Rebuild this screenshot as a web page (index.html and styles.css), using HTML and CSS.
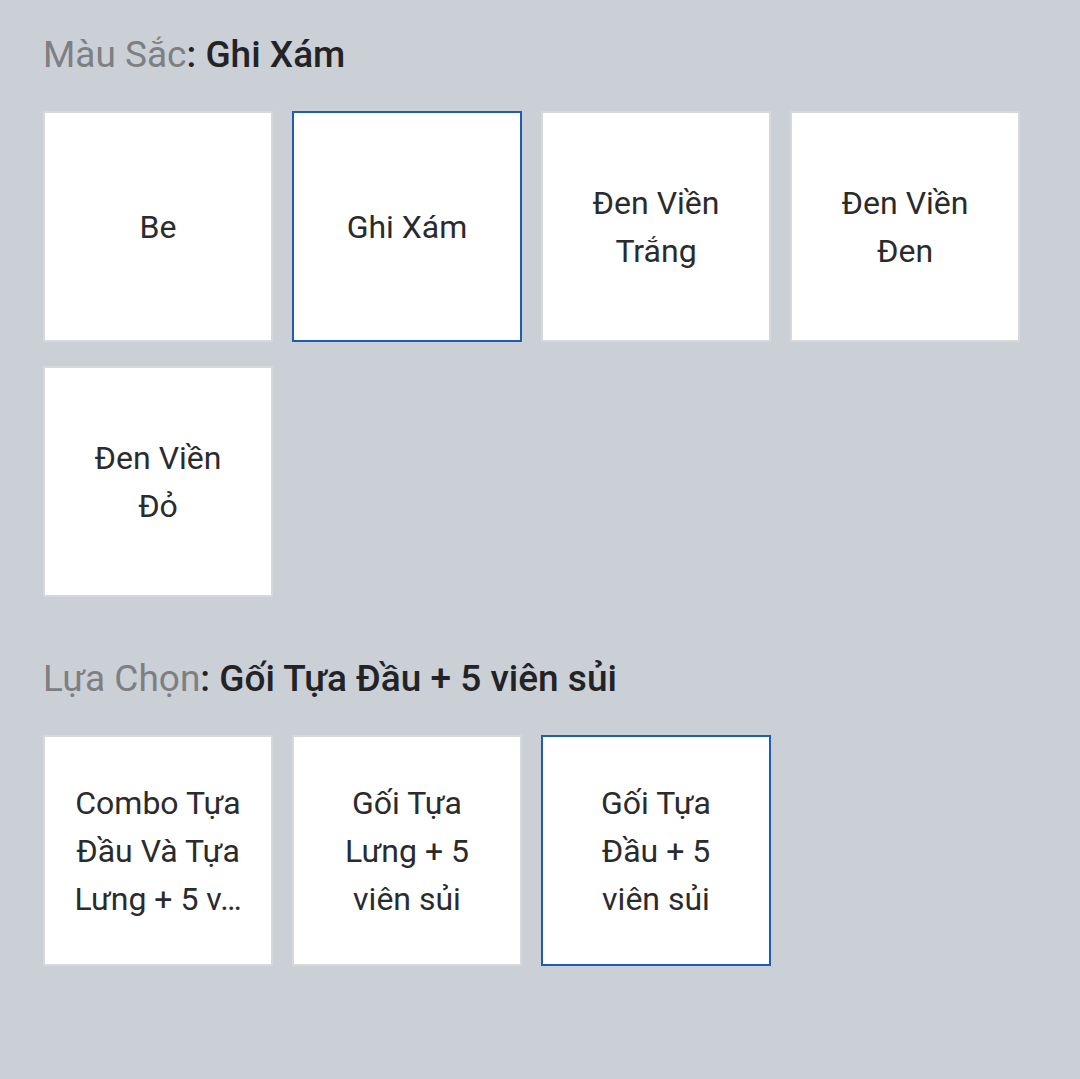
FILE: index.html
```html
<!DOCTYPE html>
<html lang="vi">
<head>
<meta charset="utf-8">
<link rel="stylesheet" href="styles.css">
</head>
<body>
<div class="page">
  <section class="group">
    <h2 class="title"><span class="label">Màu Sắc</span><b>: Ghi Xám</b></h2>
    <div class="options">
      <div class="opt"><span>Be</span></div>
      <div class="opt sel"><span>Ghi Xám</span></div>
      <div class="opt"><span>Đen Viền Trắng</span></div>
      <div class="opt"><span>Đen Viền Đen</span></div>
      <div class="opt"><span>Đen Viền Đỏ</span></div>
    </div>
  </section>
  <section class="group second">
    <h2 class="title"><span class="label">Lựa Chọn</span><b>: Gối Tựa Đầu + 5 viên sủi</b></h2>
    <div class="options">
      <div class="opt"><span>Combo Tựa Đầu Và Tựa <span class="nowrap">Lưng + 5 v…</span></span></div>
      <div class="opt"><span>Gối Tựa Lưng + 5 viên sủi</span></div>
      <div class="opt sel"><span>Gối Tựa Đầu + 5 viên sủi</span></div>
    </div>
  </section>
</div>
</body>
</html>
```
FILE: styles.css
```css
html, body {
  margin: 0;
  padding: 0;
  background: #cbcfd6;
}
body {
  font-family: Roboto, "Noto Sans", "Liberation Sans", sans-serif;
  width: 1080px;
  height: 1079px;
  overflow: hidden;
}
.page {
  padding: 30px 0 0 43px;
}
.group.second {
  margin-top: 57px;
}
.title {
  margin: 0;
  font-size: 37px;
  font-weight: 400;
  line-height: 50px;
  color: #222326;
}
.title .label {
  color: #7d7f83;
}
.title b {
  font-weight: 500;
}
.options {
  margin-top: 31px;
  display: grid;
  grid-template-columns: repeat(4, 230px);
  column-gap: 19px;
  row-gap: 24px;
}
.opt {
  box-sizing: border-box;
  width: 230px;
  height: 231px;
  background: #fff;
  border: 2px solid #d7d8da;
  display: flex;
  align-items: center;
  justify-content: center;
  text-align: center;
  padding: 1px 28px 0;
  font-size: 32px;
  line-height: 48px;
  color: #2a2b2d;
}
.opt.sel {
  border-color: #1f5eae;
}
.nowrap {
  white-space: nowrap;
}
```
